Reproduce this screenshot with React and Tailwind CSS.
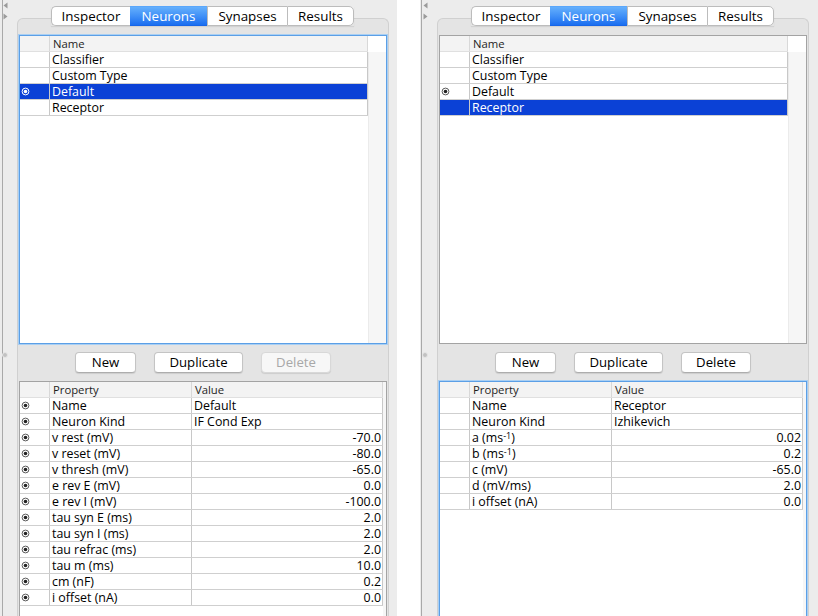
import React from "react";

const Radio = ({ white }) => (
  <svg width="9" height="9" viewBox="0 0 9 9" className="block">
    <circle cx="4.5" cy="4.5" r="3.4" fill={white ? "none" : "#fff"} stroke={white ? "#fff" : "#5c5c5c"} strokeWidth="1" />
    <circle cx="4.5" cy="4.5" r="1.8" fill={white ? "#fff" : "#222"} />
  </svg>
);

function NameTable({ focused, rows, selected }) {
  return (
    <div
      className={`flex h-[309px] shrink-0 border bg-white ${
        focused ? "border-[#5b9fe6] shadow-[0_0_0_1px_#a9cff3]" : "border-[#a3a3a3]"
      }`}
    >
      <div className="flex w-[348px] flex-col">
        <div className="flex h-[16px] shrink-0 border-b border-[#e0e0e0] bg-[#f3f3f3] text-[11.3px] leading-[16px] text-[#1e1e1e]">
          <div className="w-[30px] border-r border-[#d8d8d8]" />
          <div className="flex-1 border-r border-[#d8d8d8] pl-[3px]">Name</div>
        </div>
        {rows.map((r, i) => {
          const sel = i === selected;
          return (
            <div
              key={r.name}
              className={`flex h-[16px] shrink-0 border-b border-[#cfcfcf] text-[12.4px] leading-[16px] ${
                sel ? "bg-[#0b41d6] text-white" : "text-black"
              }`}
            >
              <div className="flex w-[30px] items-center border-r border-[#c8c8c8] pl-[1px]">
                {r.icon && <Radio white={sel} />}
              </div>
              <div className="flex-1 whitespace-nowrap border-r border-[#c8c8c8] pl-[2px]">{r.name}</div>
            </div>
          );
        })}
        <div className="flex-1 bg-white" />
      </div>
      <div className="flex w-[18px] flex-col">
        <div className="h-[16px] bg-white" />
        <div className="flex-1 border-l border-[#ebebeb] bg-[#f6f6f6]" />
      </div>
    </div>
  );
}

function PropTable({ focused, rows }) {
  return (
    <div
      className={`flex min-h-0 flex-1 border border-b-0 bg-white ${
        focused ? "border-[#5b9fe6] shadow-[0_0_0_1px_#a9cff3]" : "border-[#a3a3a3]"
      }`}
    >
      <div className="flex w-[363px] flex-col">
        <div className="flex h-[16px] shrink-0 border-b border-[#e0e0e0] bg-[#f3f3f3] text-[11.3px] leading-[16px] text-[#1e1e1e]">
          <div className="w-[30px] border-r border-[#d8d8d8]" />
          <div className="w-[142px] border-r border-[#d8d8d8] pl-[3px]">Property</div>
          <div className="w-[191px] border-r border-[#d8d8d8] pl-[3px]">Value</div>
        </div>
        {rows.map((r) => (
          <div
            key={r.key}
            className="flex h-[16px] shrink-0 border-b border-[#cfcfcf] text-[12.4px] leading-[16px] text-black"
          >
            <div className="flex w-[30px] items-center border-r border-[#c8c8c8] pl-[1px]">
              {r.icon && <Radio />}
            </div>
            <div className="w-[142px] whitespace-nowrap border-r border-[#c8c8c8] pl-[2px]">{r.label}</div>
            <div
              className={`w-[191px] whitespace-nowrap border-r border-[#c8c8c8] ${
                r.num ? "pr-[1px] text-right" : "pl-[2px]"
              }`}
            >
              {r.value}
            </div>
          </div>
        ))}
        <div className="flex-1 bg-white" />
      </div>
      <div className="w-[3px] bg-[#f6f6f6]" />
    </div>
  );
}

function Tabs() {
  const base = "flex h-[20px] items-center justify-center pt-px text-[13.4px] leading-none";
  return (
    <div className="relative z-10 flex pl-[34px] pt-[6px]">
      <div className="flex shadow-[0_1px_1px_rgba(0,0,0,0.08)]">
        <div className={`${base} w-[79px] rounded-l-[5px] border border-r-0 border-[#bcbcbc] bg-white text-black`}>
          Inspector
        </div>
        <div className={`${base} w-[77px] border-y border-t-[#5ba7fb] border-b-[#1665e8] bg-linear-to-b from-[#65b0fc] to-[#1a6ef0] text-white`}>
          Neurons
        </div>
        <div className={`${base} w-[80px] border-y border-l border-[#bcbcbc] bg-white text-black`}>
          Synapses
        </div>
        <div className={`${base} w-[67px] rounded-r-[5px] border border-[#bcbcbc] bg-white text-black`}>
          Results
        </div>
      </div>
    </div>
  );
}

function Btn({ children, w, disabled }) {
  return (
    <div
      className={`flex h-[21px] items-center justify-center rounded-[4px] border pt-px text-[13.2px] leading-none shadow-[0_1px_1px_rgba(0,0,0,0.1)] ${w} ${
        disabled
          ? "border-[#d8d8d8] bg-[#f7f7f7] text-[#a8a8a8]"
          : "border-[#c4c4c4] border-b-[#adadad] bg-white text-black"
      }`}
    >
      {children}
    </div>
  );
}

function Half({ widthCls, lineCls, prCls, focusTop, topRows, selected, props, deleteDisabled }) {
  return (
    <div className={`flex h-[616px] shrink-0 overflow-hidden bg-[#ececec] ${widthCls}`}>
      <div className="relative w-[9px] shrink-0">
        <div className={`absolute top-0 bottom-0 w-px bg-[#a9a9a9] ${lineCls}`} />
        <svg className="absolute left-[3px] top-[2px]" width="5" height="7" viewBox="0 0 5 7">
          <polygon points="4.5,0.5 4.5,6.5 0.5,3.5" fill="#9a9a9a" />
        </svg>
        <svg className="absolute left-[3px] top-[13px]" width="5" height="7" viewBox="0 0 5 7">
          <polygon points="0.5,0.5 0.5,6.5 4.5,3.5" fill="#9a9a9a" />
        </svg>
        <div className="absolute left-[2px] top-[352px] h-[6px] w-[6px] rounded-full border border-[#e6e6e6] bg-[#c2c2c2]" />
      </div>
      <div className={`flex flex-1 flex-col pl-[8px] ${prCls}`}>
        <Tabs />
        <div className="-mt-[8px] flex w-[372px] flex-1 flex-col rounded-t-[6px] border border-b-0 border-[#d0d0d0] bg-[#e4e4e4] px-px pt-[16px]">
          <NameTable focused={focusTop} rows={topRows} selected={selected} />
          <div className="mt-[8px] flex shrink-0 justify-center gap-[18px]">
            <Btn w="w-[61px]">New</Btn>
            <Btn w="w-[89px]">Duplicate</Btn>
            <Btn w="w-[70px]" disabled={deleteDisabled}>
              Delete
            </Btn>
          </div>
          <div className="mt-[8px] flex min-h-0 flex-1 flex-col">
            <PropTable focused={!focusTop} rows={props} />
          </div>
        </div>
      </div>
    </div>
  );
}

const leftTop = [
  { name: "Classifier" },
  { name: "Custom Type" },
  { name: "Default", icon: true },
  { name: "Receptor" },
];

const leftProps = [
  ["Name", "Default", false],
  ["Neuron Kind", "IF Cond Exp", false],
  ["v rest (mV)", "-70.0", true],
  ["v reset (mV)", "-80.0", true],
  ["v thresh (mV)", "-65.0", true],
  ["e rev E (mV)", "0.0", true],
  ["e rev I (mV)", "-100.0", true],
  ["tau syn E (ms)", "2.0", true],
  ["tau syn I (ms)", "2.0", true],
  ["tau refrac (ms)", "2.0", true],
  ["tau m (ms)", "10.0", true],
  ["cm (nF)", "0.2", true],
  ["i offset (nA)", "0.0", true],
].map(([label, value, num]) => ({ key: label, label, value, num, icon: true }));

const sup = (t) => (
  <>
    {t} (ms<span className="inline-block align-top text-[9px] leading-[11px]">-1</span>)
  </>
);

const rightProps = [
  { key: "n", label: "Name", value: "Receptor" },
  { key: "k", label: "Neuron Kind", value: "Izhikevich" },
  { key: "a", label: sup("a"), value: "0.02", num: true },
  { key: "b", label: sup("b"), value: "0.2", num: true },
  { key: "c", label: "c (mV)", value: "-65.0", num: true },
  { key: "d", label: "d (mV/ms)", value: "2.0", num: true },
  { key: "i", label: "i offset (nA)", value: "0.0", num: true },
];

export default function App() {
  return (
    <div className="flex h-[616px] w-[818px] overflow-hidden bg-white font-['Open_Sans',sans-serif]">
      <Half
        widthCls="w-[397px]"
        lineCls="left-[2px]"
        prCls="pr-[8px]"
        focusTop
        topRows={leftTop}
        selected={2}
        props={leftProps}
        deleteDisabled
      />
      <div className="w-[23px] shrink-0 bg-white" />
      <Half
        widthCls="w-[398px]"
        lineCls="left-[1px]"
        prCls="pr-[9px]"
        focusTop={false}
        topRows={leftTop}
        selected={3}
        props={rightProps}
      />
    </div>
  );
}
